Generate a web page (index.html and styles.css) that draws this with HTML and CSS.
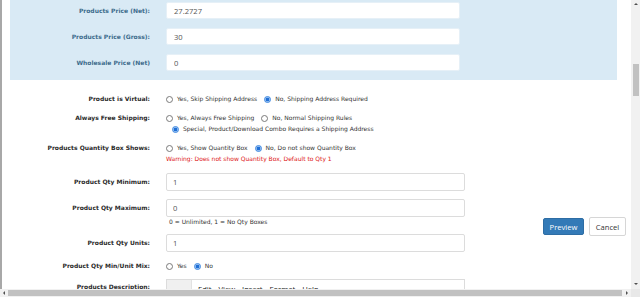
FILE: index.html
```html
<!DOCTYPE html>
<html lang="en">
<head>
    <meta charset="UTF-8">
    <title>Edit Product</title>
    <link rel="stylesheet" href="styles.css">
</head>
<body>
    <div class="screen">
        <div class="page">
            <!-- price block -->
            <div class="price-panel">
                <div class="row">
                    <div class="label price-label">Products Price (Net):</div>
                    <input class="text-input price-input" type="text" value="27.2727">
                </div>
                <div class="row">
                    <div class="label price-label">Products Price (Gross):</div>
                    <input class="text-input price-input" type="text" value="30">
                </div>
                <div class="row">
                    <div class="label price-label">Wholesale Price (Net)</div>
                    <input class="text-input price-input" type="text" value="0">
                </div>
            </div>

            <div class="form-body">
                <div class="fields">
                    <div class="row row-radio">
                        <div class="label">Product is Virtual:</div>
                        <div class="field">
                            <div class="radio-line">
                                <label class="option"><input type="radio" name="virtual">Yes, Skip Shipping Address</label>
                                <label class="option"><input type="radio" name="virtual" checked>No, Shipping Address Required</label>
                            </div>
                        </div>
                    </div>

                    <div class="row row-radio">
                        <div class="label">Always Free Shipping:</div>
                        <div class="field">
                            <div class="radio-line">
                                <label class="option"><input type="radio" name="free">Yes, Always Free Shipping</label>
                                <label class="option"><input type="radio" name="free">No, Normal Shipping Rules</label>
                            </div>
                            <div class="radio-line indent">
                                <label class="option"><input type="radio" name="free" checked>Special, Product/Download Combo Requires a Shipping Address</label>
                            </div>
                        </div>
                    </div>

                    <div class="row row-radio">
                        <div class="label">Products Quantity Box Shows:</div>
                        <div class="field">
                            <div class="radio-line">
                                <label class="option"><input type="radio" name="qtybox">Yes, Show Quantity Box</label>
                                <label class="option"><input type="radio" name="qtybox" checked>No, Do not show Quantity Box</label>
                            </div>
                            <div class="warning">Warning: Does not show Quantity Box, Default to Qty 1</div>
                        </div>
                    </div>

                    <div class="row row-input">
                        <div class="label">Product Qty Minimum:</div>
                        <div class="field">
                            <input class="text-input" type="text" value="1">
                        </div>
                    </div>

                    <div class="row row-input">
                        <div class="label">Product Qty Maximum:</div>
                        <div class="field">
                            <input class="text-input" type="text" value="0">
                            <div class="help">0 = Unlimited, 1 = No Qty Boxes</div>
                        </div>
                    </div>

                    <div class="row row-input">
                        <div class="label">Product Qty Units:</div>
                        <div class="field">
                            <input class="text-input" type="text" value="1">
                        </div>
                    </div>

                    <div class="row row-radio">
                        <div class="label">Product Qty Min/Unit Mix:</div>
                        <div class="field">
                            <div class="radio-line">
                                <label class="option"><input type="radio" name="mix">Yes</label>
                                <label class="option"><input type="radio" name="mix" checked>No</label>
                            </div>
                        </div>
                    </div>

                    <div class="row row-editor">
                        <div class="label">Products Description:</div>
                        <div class="field">
                            <div class="editor">
                                <div class="editor-side"></div>
                                <div class="menubar">
                                    <span>Edit</span>
                                    <span>View</span>
                                    <span>Insert</span>
                                    <span>Format</span>
                                    <span>Help</span>
                                </div>
                            </div>
                        </div>
                    </div>
                </div>

                <div class="actions">
                    <button class="btn btn-primary" type="button">Preview</button>
                    <button class="btn btn-default" type="button">Cancel</button>
                </div>
            </div>
        </div>

        <!-- scrollbars -->
        <div class="vscroll">
            <div class="arrow">
                <svg viewBox="0 0 8 8"><polygon points="2,5 6,5 4,3" fill="#505050"/></svg>
            </div>
            <div class="thumb-offset"></div>
            <div class="thumb"></div>
            <div class="rest"></div>
            <div class="arrow">
                <svg viewBox="0 0 8 8"><polygon points="2,3 6,3 4,5" fill="#505050"/></svg>
            </div>
        </div>
        <div class="hscroll">
            <div class="arrow">
                <svg viewBox="0 0 8 8"><polygon points="5,2 5,6 3,4" fill="#505050"/></svg>
            </div>
            <div class="thumb"></div>
            <div class="arrow">
                <svg viewBox="0 0 8 8"><polygon points="3,2 3,6 5,4" fill="#505050"/></svg>
            </div>
        </div>
        <div class="corner"></div>
    </div>
</body>
</html>
```

FILE: styles.css
```css
* {
    margin: 0;
    padding: 0;
    box-sizing: border-box;
}

body {
    background: #ffffff;
    font-family: 'DejaVu Sans', Verdana, sans-serif;
    color: #333333;
}

.screen {
    width: 640px;
    height: 297px;
    display: grid;
    grid-template-columns: 631px 9px;
    grid-template-rows: 289px 8px;
    overflow: hidden;
}

.page {
    border-left: 2px solid #a8a8a8;
    padding: 0 5px 0 8px;
    overflow: hidden;
}

/* rows */
.row {
    display: grid;
    grid-template-columns: 140px 299px;
    column-gap: 16px;
    align-items: start;
}

.label {
    font-size: 6px;
    font-weight: bold;
    color: #2a2a2a;
    text-align: right;
    line-height: 11px;
    white-space: nowrap;
}

.text-input {
    display: block;
    width: 100%;
    height: 18px;
    border: 1px solid #dcdcdc;
    border-radius: 2px;
    background: #ffffff;
    padding: 0 6px;
    font-family: 'Open Sans', 'Liberation Sans', sans-serif;
    font-size: 7.6px;
    color: #555555;
    outline: none;
}

/* price block */
.price-panel {
    background: #d9eaf5;
    margin-right: 9px;
    padding: 2px 0 9px;
    display: flex;
    flex-direction: column;
    gap: 9px;
}

.price-panel .row {
    grid-template-columns: 140px 294px;
    align-items: center;
}

.price-label {
    color: #3d6c8c;
}

.price-input {
    height: 17px;
    border-color: #e6f0f7;
    padding-left: 7px;
}

/* white form */
.form-body {
    display: flex;
    align-items: flex-start;
}

.fields {
    width: 455px;
    padding-top: 13px;
    display: flex;
    flex-direction: column;
    gap: 8px;
}

.row-input .label {
    line-height: 18px;
}

.row-editor .label {
    line-height: 16px;
}

.radio-line {
    display: flex;
    align-items: center;
    height: 11px;
}

.radio-line.indent {
    padding-left: 6px;
}

.option {
    display: flex;
    align-items: center;
    gap: 4px;
    margin-right: 7px;
    font-size: 6px;
    color: #333333;
    white-space: nowrap;
}

.option input {
    appearance: none;
    -webkit-appearance: none;
    width: 7px;
    height: 7px;
    border: 1px solid #7a7a7a;
    border-radius: 50%;
    background: #ffffff;
    margin-top: 1px;
}

.option input:checked {
    border-color: #3b86e0;
    background: radial-gradient(circle, #1f6fd6 0, #1f6fd6 40%, #a9cbf3 62%);
}

.warning {
    font-size: 6px;
    color: #dd1515;
    line-height: 12px;
    white-space: nowrap;
}

.help {
    font-size: 6px;
    line-height: 9px;
    color: #333333;
    padding-left: 3px;
}

/* description editor */
.editor {
    display: flex;
    height: 30px;
    border: 1px solid #dcdcdc;
    border-bottom: none;
}

.editor-side {
    width: 25px;
    background: #f0f0f0;
    border-right: 1px solid #e2e2e2;
}

.menubar {
    display: flex;
    gap: 7px;
    padding: 4px 0 0 6px;
    font-family: 'Open Sans', 'Liberation Sans', sans-serif;
    font-size: 7.6px;
    color: #222222;
    line-height: 10px;
}

/* buttons */
.actions {
    margin-left: auto;
    margin-top: 137px;
    display: flex;
    align-items: center;
    gap: 5px;
}

.btn {
    font-family: 'Open Sans', 'Liberation Sans', sans-serif;
    font-size: 7.6px;
    border-radius: 2px;
    border: 1px solid transparent;
    cursor: pointer;
}

.btn-primary {
    width: 41px;
    height: 17px;
    background: #337ab7;
    border-color: #2e6da4;
    color: #ffffff;
}

.btn-default {
    width: 37px;
    height: 19px;
    background: #ffffff;
    border-color: #d6d6d6;
    color: #333333;
}

/* scrollbars */
.vscroll {
    background: #f1f1f1;
    display: flex;
    flex-direction: column;
}

.vscroll .arrow {
    height: 9px;
}

.vscroll .thumb-offset {
    height: 55px;
}

.vscroll .thumb {
    height: 32px;
    margin: 0 1px 0 2px;
    background: #c1c1c1;
}

.vscroll .rest {
    flex: 1;
}

.hscroll {
    background: #f1f1f1;
    display: flex;
    align-items: stretch;
}

.hscroll .arrow {
    width: 8px;
}

.hscroll .thumb {
    flex: 1;
    margin: 1px 1px 1px 0;
    background: #c1c1c1;
}

.arrow svg {
    display: block;
    width: 8px;
    height: 8px;
    margin: 0 auto;
}

.corner {
    background: #e8e8e8;
}
```
